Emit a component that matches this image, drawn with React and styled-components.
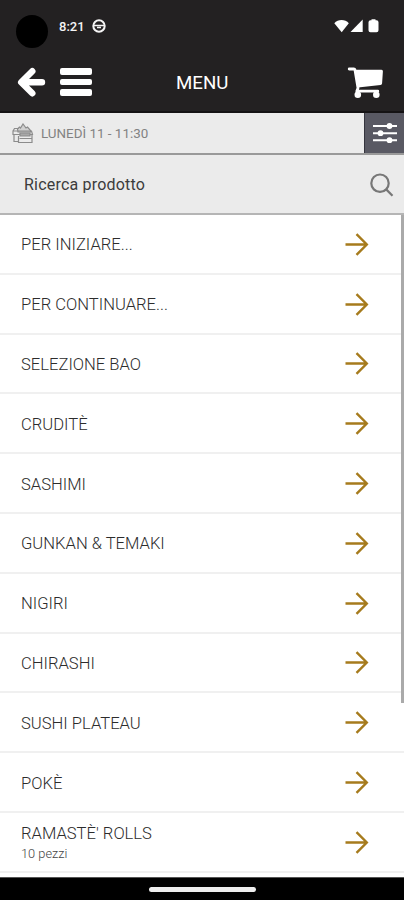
import styled, { createGlobalStyle } from "styled-components";

const categories = [
  { name: "PER INIZIARE..." },
  { name: "PER CONTINUARE..." },
  { name: "SELEZIONE BAO" },
  { name: "CRUDITÈ" },
  { name: "SASHIMI" },
  { name: "GUNKAN & TEMAKI" },
  { name: "NIGIRI" },
  { name: "CHIRASHI" },
  { name: "SUSHI PLATEAU" },
  { name: "POKÈ" },
  { name: "RAMASTÈ' ROLLS", note: "10 pezzi" },
];

function StatusBar() {
  return (
    <StatusContainer>
      <Camera />
      <Clock>8:21</Clock>
      <svg width="14" height="14" viewBox="0 0 14 14" fill="none" stroke="#f4f4f4">
        <circle cx="7" cy="7" r="5.7" strokeWidth="2" />
        <path d="M2 6.5h10M5 8.5h4" strokeWidth="1.7" />
      </svg>
      <StatusIcons width="46" height="15" viewBox="0 0 46 15" fill="#fff">
        <path d="M.3 4.200C4-.2 11.200-.2 14.800 4.200L7.700 13.200Z" />
        <path d="M28.700.500V13H16.500Z" />
        <path d="M37.500 .3h4v1h1q2 .2 2 2v8q0 2-2 2h-6q-2 0-2-2v-8q0-1.800 2-2h1z" />
      </StatusIcons>
    </StatusContainer>
  );
}

function Header() {
  return (
    <HeaderContainer>
      <IconButton aria-label="Indietro">
        <svg width="29" height="30" viewBox="0 0 29 30" fill="none" stroke="#fff">
          <path d="M15.300 4.200L4.200 15.300l11.100 11M5 15.300h20" strokeWidth="6.400" strokeLinecap="round" strokeLinejoin="round" />
        </svg>
      </IconButton>
      <Burger aria-label="Menu">
        <BurgerLine />
        <BurgerLine />
        <BurgerLine />
      </Burger>
      <Title>MENU</Title>
      <IconButton aria-label="Carrello">
        <svg width="38" height="33" viewBox="0 0 38 33" fill="#fff">
          <path d="M2.200 3h4.600q1 0 1.200 1l3 18-1.200 3.200h21" fill="none" stroke="#fff" strokeWidth="2.800" strokeLinecap="round" strokeLinejoin="round" />
          <path d="M7.500 3.800h27q1.500 0 1.400 1.500l-.8 12q-.1 1.400-1.600 1.700L11 21.500z" />
          <circle cx="10.800" cy="28.700" r="3.300" />
          <circle cx="29.300" cy="28.700" r="3.300" />
        </svg>
      </IconButton>
    </HeaderContainer>
  );
}

function DateBar() {
  return (
    <DateContainer>
      <svg width="22" height="21" viewBox="0 0 22 21" fill="none" stroke="#8c8c8c" strokeWidth="1.200">
        <path d="M5.500 6l2-2 1 1 2.500-4L14 5l1.500-1 3 3.500v1.500H6z" fill="#d0d0d0" />
        <path d="M1 8l1.500-2.500h4M1 8h18.500l1 3.500H1zM2 11.500V18.500h4M6.500 13v6.500H20v-8M7.500 15.500h12" />
        <path d="M8 10h10v3H8z" fill="#a8a8a8" />
      </svg>
      <DateText>LUNEDÌ 11 - 11:30</DateText>
      <FilterButton aria-label="Filtri">
        <svg width="24" height="22" viewBox="0 0 24 22" fill="#fff" stroke="#fff" strokeWidth="2">
          <path d="M0 4h24M0 11.200h24M0 18.200h24" />
          <circle cx="16.500" cy="4" r="1.900" />
          <circle cx="7.500" cy="11.200" r="1.900" />
          <circle cx="16.500" cy="18.200" r="1.900" />
        </svg>
      </FilterButton>
    </DateContainer>
  );
}

function SearchBar() {
  return (
    <SearchContainer>
      <SearchText>Ricerca prodotto</SearchText>
      <svg width="24" height="24" viewBox="0 0 24 24" fill="none" stroke="#777" strokeWidth="2.200">
        <circle cx="10" cy="10.200" r="8.700" />
        <path d="M16.200 16.400l6.300 6.300" />
      </svg>
    </SearchContainer>
  );
}

function Arrow() {
  return (
    <svg width="24" height="24" viewBox="0 0 24 24" fill="none" stroke="#a67b1d" strokeWidth="2.400">
      <path d="M.5 12.500h21.500M11.500 2.200L21.800 12.500 11.500 22.800" />
    </svg>
  );
}

function App() {
  return (
    <>
      <GlobalStyle />
      <Screen>
        <StatusBar />
        <Header />
        <DateBar />
        <SearchBar />
        <List>
          {categories.map(({ name, note }) => (
            <Row key={name}>
              <RowLabel>
                <RowName>{name}</RowName>
                {note && <RowNote>{note}</RowNote>}
              </RowLabel>
              <Arrow />
            </Row>
          ))}
          <ScrollThumb />
        </List>
        <NavigationBar>
          <HomeHandle />
        </NavigationBar>
      </Screen>
    </>
  );
}

export default App;

const GlobalStyle = createGlobalStyle`
  * {
    box-sizing: border-box;
  }

  body {
    margin: 0;
    font-family: Roboto, "Liberation Sans", sans-serif;
  }

  button {
    border: 0;
    padding: 0;
    background: none;
  }

  svg {
    display: block;
    flex-shrink: 0;
  }
`;

const Screen = styled.div`
  display: flex;
  flex-direction: column;
  width: 404px;
  height: 900px;
  overflow: hidden;
  background: #fff;
`;

const StatusContainer = styled.div`
  display: flex;
  flex-shrink: 0;
  height: 53px;
  padding: 15px 24px 0 16px;
  background: #232122;

  > svg {
    margin: 4px 0 0 7px;
  }
`;

const Camera = styled.div`
  width: 32px;
  height: 33px;
  border-radius: 50%;
  background: #000;
`;

const Clock = styled.span`
  width: 26px;
  margin: 3px 0 0 11px;
  color: #f4f4f4;
  font-size: 13px;
  font-weight: 500;
  line-height: 18px;
  white-space: nowrap;
`;

const StatusIcons = styled.svg`
  && {
    margin-left: auto;
  }
`;

const HeaderContainer = styled.header`
  display: flex;
  flex-shrink: 0;
  align-items: center;
  height: 60px;
  padding: 0 19px 0 17px;
  border-bottom: 2px solid #151314;
  background: #232122;
`;

const IconButton = styled.button`
  flex-shrink: 0;
`;

const Burger = styled.button`
  display: flex;
  flex-direction: column;
  gap: 4px;
  width: 32px;
  margin-left: 14px;
`;

const BurgerLine = styled.span`
  height: 6.500px;
  border-radius: 2px;
  background: #fff;
`;

const Title = styled.h1`
  flex-grow: 1;
  margin: 0;
  padding: 2px 0 0 84px;
  color: #fff;
  font-size: 18.700px;
  font-weight: 400;
`;

const DateContainer = styled.div`
  display: flex;
  flex-shrink: 0;
  align-items: center;
  height: 42px;
  padding-left: 12px;
  border-bottom: 2px solid #999;
  background: #ebebeb;
`;

const DateText = styled.span`
  margin: 1px 0 0 7px;
  color: #828282;
  font-size: 13.400px;
`;

const FilterButton = styled.button`
  display: flex;
  align-items: center;
  justify-content: center;
  align-self: stretch;
  width: 40px;
  margin-left: auto;
  border-left: 1px solid #34343d;
  background: #595963;
`;

const SearchContainer = styled.div`
  display: flex;
  flex-shrink: 0;
  align-items: center;
  justify-content: space-between;
  height: 60px;
  padding: 1px 10px 0 24px;
  border-bottom: 2px solid #b5b5b5;
  background: #ebebeb;
`;

const SearchText = styled.span`
  color: #3c3c3c;
  font-size: 16px;
  letter-spacing: 0.2px;
`;

const List = styled.div`
  position: relative;
  flex-grow: 1;
  background: #fff;
`;

const Row = styled.div`
  display: flex;
  align-items: center;
  justify-content: space-between;
  height: 59.800px;
  padding: 0 35px 0 21px;
  border-bottom: 2px solid #f0f0f0;
`;

const RowLabel = styled.div`
  display: flex;
  flex-direction: column;
  padding-top: 3px;
`;

const RowName = styled.span`
  color: #2c2c2c;
  font-size: 16.600px;
  font-weight: 300;
  line-height: 22px;
`;

const RowNote = styled.span`
  color: #444;
  font-size: 12.800px;
  font-weight: 300;
  line-height: 18px;
`;

const ScrollThumb = styled.div`
  position: absolute;
  top: 0;
  right: 0;
  width: 3px;
  height: 488px;
  background: #aaa;
`;

const NavigationBar = styled.div`
  display: flex;
  flex-shrink: 0;
  align-items: center;
  justify-content: center;
  height: 23px;
  border-top: 1px solid #555;
  background: #000;
`;

const HomeHandle = styled.div`
  width: 107px;
  height: 5px;
  border-radius: 3px;
  background: #eee;
`;
